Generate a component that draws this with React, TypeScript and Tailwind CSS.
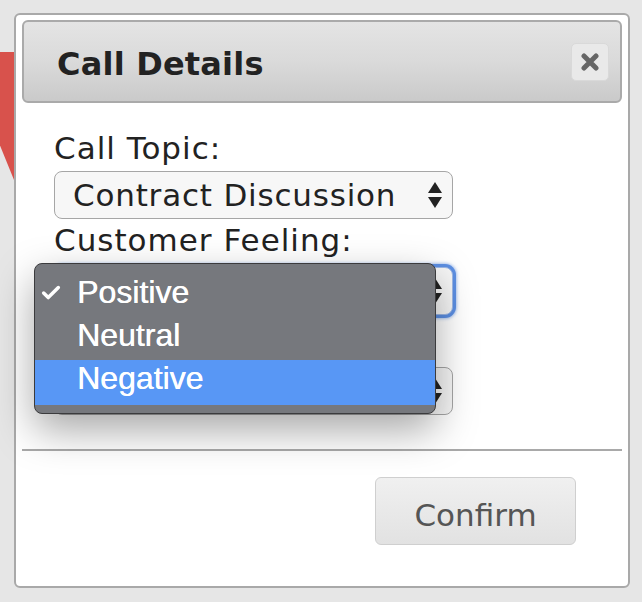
import { Check } from 'lucide-react'

const serif = "font-['DejaVu_Sans','Verdana',sans-serif]"

function Arrows() {
  return (
    <svg width="16" height="28" viewBox="0 0 16 28" className="shrink-0">
      <path d="M8 1 L15 12 L1 12 Z" fill="#222" />
      <path d="M1 16 L15 16 L8 27 Z" fill="#222" />
    </svg>
  )
}

function CloseIcon() {
  return (
    <svg width="20" height="18" viewBox="0 0 20 18">
      <path d="M4 3 L16 15 M16 3 L4 15" stroke="#666" strokeWidth="5" strokeLinecap="round" />
    </svg>
  )
}

export default function App() {
  return (
    <div className="relative min-h-[602px] overflow-hidden bg-[#e6e6e6] pl-[14px] pt-[13px]">
      {/* red thing behind the dialog */}
      <div className="absolute left-0 top-[52px] h-[128px] w-[14px] bg-[#d8524c] [clip-path:polygon(0_0,100%_0,100%_100%,0_73%)]" />

      {/* Dialog */}
      <div className={`relative w-[616px] rounded-[6px] border-2 border-[#a9a9a9] bg-white px-[6px] pb-[41px] pt-[5px] ${serif}`}>
        {/* Header */}
        <div className="flex h-[83px] items-center justify-between rounded-[6px] border-2 border-[#aaaaaa] bg-gradient-to-b from-[#e4e4e4] via-[#dadada] to-[#cacaca] pl-[33px] pr-[11px]">
          <h1 className="pt-[4px] text-[32px] font-bold tracking-[0.2px] text-[#222]">Call Details</h1>
          <button className="flex h-[38px] w-[38px] items-center justify-center rounded-[5px] border border-[#d9d9d9] bg-[#e9e9e9]">
            <CloseIcon />
          </button>
        </div>

        {/* Form */}
        <div className="px-[32px] pt-[28px] text-[#222]">
          <div className="text-[31px] leading-[34px] tracking-[1px]">Call Topic:</div>
          <div className="mt-[6px] flex h-[48px] w-[399px] items-center justify-between rounded-[8px] border border-[#a6a6a6] bg-[#f7f7f7] pl-[18px] pr-[9px]">
            <span className="text-[31px] tracking-[0.8px]">Contract Discussion</span>
            <Arrows />
          </div>

          <div className="mt-[4px] text-[31px] leading-[34px] tracking-[1px]">Customer Feeling:</div>
          <div className="relative mt-[10px]">
            <div className="flex h-[48px] w-[399px] items-center justify-end rounded-[8px] border border-[#9db8e6] bg-[#f7f7f7] pl-[18px] pr-[9px] shadow-[0_0_0_3px_#5c8fe3,0_0_3px_4px_rgba(92,143,227,0.5)]">
              <Arrows />
            </div>

            {/* open select menu */}
            <div className="absolute left-[-20px] top-[-4px] z-10 w-[402px] overflow-hidden rounded-[8px] border border-[#3b3b3d] bg-[#76787d] pb-[8px] pt-[10px] font-['Liberation_Sans','Helvetica',sans-serif] text-[32px] text-white shadow-[0_16px_40px_rgba(0,0,0,0.35)] [text-shadow:0.4px_0_0_#fff]">
              <div className="flex h-[43px] items-start leading-[36px]">
                <span className="flex w-[42px] justify-start pl-[5px] pt-[8px]">
                  <Check size={22} strokeWidth={3.8} />
                </span>
                <span>Positive</span>
              </div>
              <div className="flex h-[43px] items-start pl-[42px] leading-[36px]">Neutral</div>
              <div className="flex h-[45px] items-start bg-[#5897f5] pl-[42px] leading-[36px]">Negative</div>
            </div>
          </div>

          <div className="mt-[52px] flex h-[48px] w-[399px] items-center justify-end rounded-[8px] border border-[#a6a6a6] bg-[#f7f7f7] pl-[18px] pr-[9px]">
            <Arrows />
          </div>
        </div>

        <div className="mt-[34px] h-[2px] bg-[#a9a9a9]" />

        <div className="flex justify-end pr-[46px] pt-[26px]">
          <button className="flex h-[68px] w-[201px] items-center justify-center rounded-[6px] border border-[#cfcfcf] bg-gradient-to-b from-[#f0f0f0] to-[#e2e2e2] pt-[8px] text-[31px] text-[#555]">
            Confirm
          </button>
        </div>
      </div>
    </div>
  )
}
